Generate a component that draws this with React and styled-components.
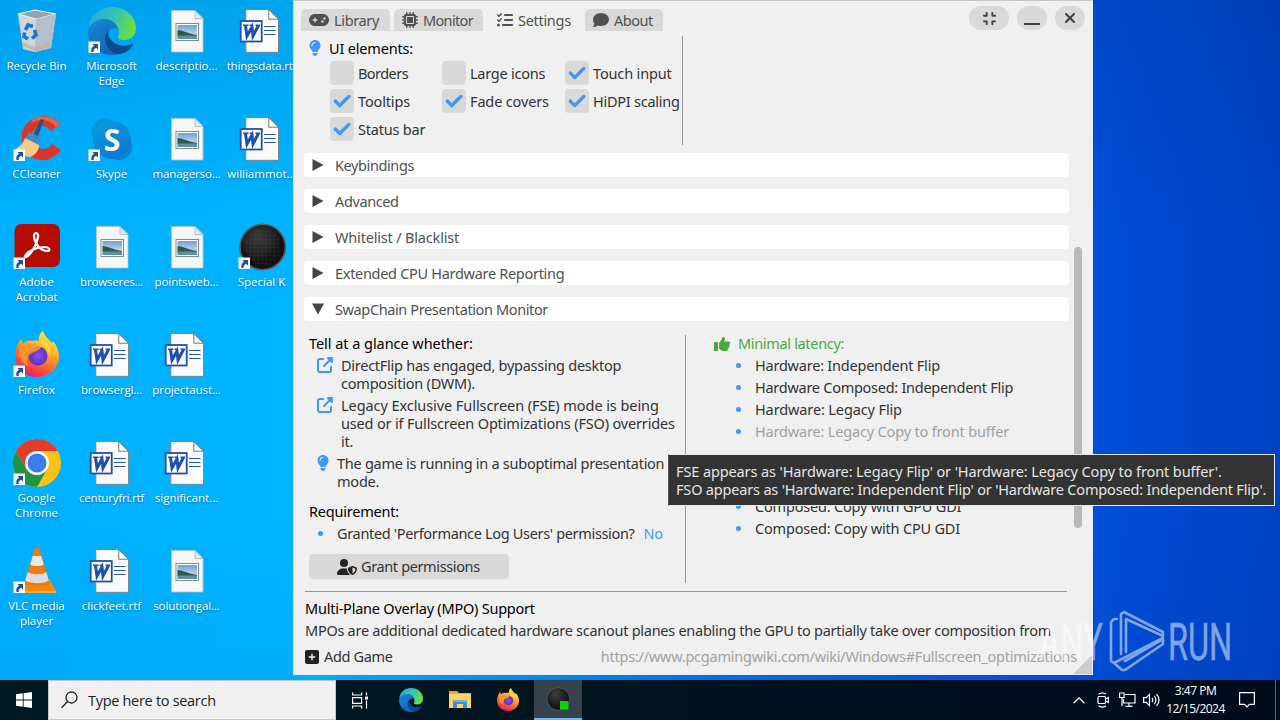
import styled, { createGlobalStyle } from "styled-components";
import {
  FaGamepad,
  FaMicrochip,
  FaListCheck,
  FaComment,
  FaLightbulb,
  FaUpRightFromSquare,
  FaThumbsUp,
  FaUserShield,
  FaSquarePlus,
  FaCheck,
  FaCompress,
  FaXmark,
} from "react-icons/fa6";

const GlobalStyle = createGlobalStyle`
  * { box-sizing: border-box; }
  body { margin: 0; overflow: hidden; }
`;

const blue = "#4296fa";

/* ---------- desktop ---------- */

const Screen = styled.div`
  position: relative;
  width: 1280px;
  height: 720px;
  display: flex;
  flex-direction: column;
  overflow: hidden;
  font-family: "Noto Sans", "Liberation Sans", sans-serif;
`;

const Desktop = styled.main`
  flex: 1;
  overflow: hidden;
  background:
    linear-gradient(180deg, rgba(0, 30, 80, 0.1) 0%, rgba(0, 0, 0, 0) 35%, rgba(0, 0, 0, 0) 75%, rgba(0, 20, 90, 0.04) 100%),
    linear-gradient(90deg, #00b0ff 0%, #00b4ff 24%, #0090ee 42%, #0062dc 66%, #0050da 84%, #0041c4 100%);
`;

const IconGrid = styled.div`
  display: grid;
  grid-auto-flow: column;
  grid-template-rows: repeat(6, 108px);
  grid-auto-columns: 75px;
  margin-left: -1px;
  padding-top: 7px;
`;

const Shortcut = styled.div`
  display: flex;
  flex-direction: column;
  align-items: center;
  svg {
    align-self: flex-start;
    margin-left: 14px;
    overflow: visible;
  }
`;

const Label = styled.span`
  margin-top: 3px;
  font-family: "Open Sans", "Noto Sans", sans-serif;
  font-size: 11.5px;
  line-height: 15px;
  letter-spacing: ${(p) => p.$ls || 0}px;
  color: #fff;
  text-align: center;
  white-space: pre;
  text-shadow: 0 1px 2px rgba(0, 40, 90, 0.55);
`;

const Badge = () => (
  <g>
    <rect x="0.5" y="34.5" width="11.5" height="11.5" fill="#f7f9fb" />
    <path d="M4.500 37h5.500v5.500l-1.800-1.800c-1.900 0.700-2.700 2-2.600 4.300h-2.200c-0.500-3.300 0.500-5.200 2.700-6.200z" fill="#264f96" />
  </g>
);

const EdgeArt = () => (
  <g>
    <defs>
      <linearGradient id="eg1" x1="0" y1="0.2" x2="1" y2="0.5">
        <stop offset="0" stopColor="#2aa8dc" />
        <stop offset="0.5" stopColor="#35c1b8" />
        <stop offset="1" stopColor="#6be03c" />
      </linearGradient>
      <linearGradient id="eg2" x1="0" y1="0" x2="0.6" y2="1">
        <stop offset="0" stopColor="#1a86d8" />
        <stop offset="1" stopColor="#1263b5" />
      </linearGradient>
    </defs>
    <path d="M0.500 21C2 8 12 0 24 0c14 0 24 10 24 21 0 8-6 12-12 12-5 0-7-2-6-4 2-3 1-7-2-11C22 10 9 10 0.500 21z" fill="url(#eg1)" />
    <path d="M0 25C1 16 9 12 16 12c7 0 13 4 14 10-3-2-9-1-10 5-2 9 5 17 17 17-4 3-9 4-13 4C10 48 0 37 0 25z" fill="url(#eg2)" />
    <path d="M20 23c-6 8-2 21 9 24 7 0.500 13-4 16-9 0.500-1-0.500-1.500-1.500-1C32 42 19 35 20 23z" fill="#0d4a93" />
  </g>
);

const FirefoxArt = () => (
  <g>
    <defs>
      <linearGradient id="ff1" x1="0.8" y1="0" x2="0.3" y2="1">
        <stop offset="0" stopColor="#fff04a" />
        <stop offset="0.35" stopColor="#ffb52a" />
        <stop offset="0.65" stopColor="#ff6a2c" />
        <stop offset="1" stopColor="#f0136c" />
      </linearGradient>
      <radialGradient id="ff2">
        <stop offset="0" stopColor="#8a4cf0" />
        <stop offset="1" stopColor="#5a36b8" />
      </radialGradient>
    </defs>
    <path d="M2 25C2 18 4 14 8 8c1 3 2 4 3 4 2-2 5-3 8-2 2-1 5-1 7 0-1-4 1-8 4-10 2 6 6 8 9 12l1-2c4 5 6 10 6 15 0 12-10 21-22 21S2 37 2 25z" fill="url(#ff1)" />
    <circle cx="25" cy="25" r="9.500" fill="url(#ff2)" />
    <path d="M8 14c4-3 9-2 12 1 3 1 6 0 8 1-1 3-5 4-7 5-2 1-5 2-6 4-2 3-1 7 1 10-4-1-7-4-9-8-2-5-1-9 1-13z" fill="#ff9a2e" opacity="0.85" />
    <path d="M28 7c7 5 10 10 9 19-1-6-4-9-8-11z" fill="#ffd83e" />
  </g>
);

const SpecialKArt = () => (
  <g>
    <defs>
      <radialGradient id="sk1" cx="0.4" cy="0.3">
        <stop offset="0" stopColor="#3a3a3a" />
        <stop offset="0.7" stopColor="#202122" />
        <stop offset="1" stopColor="#121212" />
      </radialGradient>
      <pattern id="sk2" width="4" height="4" patternUnits="userSpaceOnUse">
        <path d="M0 0h4M0 0v4" stroke="#464646" strokeWidth="1" opacity="0.45" />
      </pattern>
    </defs>
    <circle cx="24.700" cy="24" r="22.700" fill="url(#sk1)" stroke="#5a6064" strokeWidth="1.600" />
    <circle cx="24.700" cy="24" r="18" fill="url(#sk2)" />
  </g>
);

const art = {
  bin: (
    <g>
      <path d="M5 7L22 3l21 4-5 34-16 4-12-3z" fill="#cfd6dc" />
      <path d="M5 7l18 5 20-5-21-4z" fill="#8fa3b3" stroke="#eef3f6" strokeWidth="1.200" />
      <path d="M23 12l20-5-5 34-16 4z" fill="#b4bfc9" />
      <path d="M9 39l13 5 16-4-1-4-15 4-13-5z" fill="#c9aa9c" opacity="0.7" />
      <g fill="none" stroke="#1976cc" strokeWidth="3.600">
        <path d="M12.500 23l2.500-5 5 1.500" />
        <path d="M21.500 23l1.500 5-4 3.500" />
        <path d="M15 32l-4-2.500 0.500-4" />
      </g>
    </g>
  ),
  edge: <EdgeArt />,
  ccleaner: (
    <g>
      <path d="M47 9C41 1 29-1 20 4 10 9 6 20 10 31s16 17 26 13c5-2 9-5 12-9l-9-6c-4 6-12 7-17 1-4-5-4-12 0-16 5-5 11-4 16 2z" fill="#d8362a" />
      <path d="M20 4C30-1 41 2 47 9l-4 3C37 4 27 3 18 8z" fill="#f0614c" />
      <path d="M28 4l3 1-7 19-5-2z" fill="#23557f" />
      <path d="M16 17l12 5-3 9-13-7z" fill="#3d8cc4" />
      <path d="M12 23l14 7c0 6-4 10-9 12-6 0-12-4-15-8 5-2 8-6 10-11z" fill="#f3cd88" />
    </g>
  ),
  skype: (
    <g>
      <defs>
        <linearGradient id="sky" x1="0" y1="0" x2="0.5" y2="1">
          <stop offset="0" stopColor="#0a9de0" />
          <stop offset="1" stopColor="#0d7ad2" />
        </linearGradient>
      </defs>
      <circle cx="17" cy="17" r="13.500" fill="#0795d6" />
      <circle cx="31" cy="32" r="13" fill="#0b84d6" />
      <circle cx="24" cy="25" r="19" fill="url(#sky)" />
      <text x="24" y="35.500" textAnchor="middle" fontFamily="Open Sans, sans-serif" fontWeight="700" fontSize="30" fill="#fff">S</text>
    </g>
  ),
  acrobat: (
    <g>
      <rect x="1.500" y="1" width="45.500" height="43" rx="7" fill="#b30b00" />
      <path d="M12 33c2-4 11-9 19-9 6 0 7 4 3 4-7 0-13-9-13-15 0-4 5-4 4 1-1 6-5 14-9 18-2 2-5 3-4 1z" fill="none" stroke="#fff" strokeWidth="2.200" strokeLinejoin="round" />
    </g>
  ),
  firefox: <FirefoxArt />,
  chrome: (
    <g>
      <circle cx="24" cy="24" r="24" fill="#fbc116" />
      <path d="M24 24v-12h20.800A24 24 0 0 0 3.200 12L13.600 30z" fill="#e33b2e" />
      <path d="M3.200 12A24 24 0 0 0 24 48L34.400 30 24 24 13.600 30z" fill="#229342" />
      <circle cx="24" cy="24" r="12" fill="#fff" />
      <circle cx="24" cy="24" r="9.500" fill="#3b7ded" />
    </g>
  ),
  vlc: (
    <g>
      <path d="M12 33h25l6 11c0 1.500-0.500 2-2 2H7c-1.500 0-2-0.500-2-2z" fill="#f18a0c" />
      <path d="M5 44h38v2H5z" fill="#f9b035" />
      <path d="M24 1c1.500 0 2.500 0.500 3 2l9.500 33c-3 5-22 5-25 0L21 3c0.500-1.500 1.500-2 3-2z" fill="#ee7d0d" />
      <path d="M19.800 9h8.400l2.600 8.500c-3 2-10.600 2-13.600 0z" fill="#e9e9e9" />
      <path d="M14.700 25c4 3 14.600 3 18.600 0l2.500 8.500c-5 3.500-18.600 3.500-23.600 0z" fill="#dedede" />
    </g>
  ),
  image: (
    <g>
      <defs>
        <linearGradient id="sky2" x1="0" y1="0" x2="0" y2="1">
          <stop offset="0" stopColor="#6f9ed6" />
          <stop offset="1" stopColor="#e6f1f8" />
        </linearGradient>
      </defs>
      <path d="M8.500 3.500h23.500l8 8v33.500h-31.500z" fill="#f6f6f6" stroke="#b9c4c9" strokeWidth="0.800" />
      <path d="M32 3.500v8h8z" fill="#e2ebf1" stroke="#9fb2bd" strokeWidth="0.800" />
      <rect x="13" y="16.500" width="22.500" height="17" fill="#fff" stroke="#7d8d98" />
      <rect x="14.500" y="18" width="19.500" height="14" fill="url(#sky2)" />
      <path d="M14.500 23c4 0 9 3 19.500 5v1H14.500z" fill="#2f5a48" />
      <path d="M14.500 28.500H34V32H14.500z" fill="#5f8fa6" />
    </g>
  ),
  word: (
    <g>
      <path d="M7.800 2.500h23l9.700 9.700v33.100H7.800z" fill="#fbfbfb" stroke="#7a7f85" strokeWidth="0.900" />
      <path d="M30.800 2.500v9.700h9.700z" fill="#fff" stroke="#5f646a" strokeWidth="0.900" />
      <path d="M26 19.500h11.500M26 23.500h11.500M26 27.500h11.500" stroke="#2a5699" strokeWidth="1.100" />
      <rect x="2.700" y="14" width="21" height="20.500" fill="#fff" stroke="#1f4fae" strokeWidth="1.800" />
      <path d="M7.500 18.500l1.500 10.500 5-9 1 9 5.500-10.500" fill="none" stroke="#1f4fae" strokeWidth="3" />
      <path d="M5 18.300h5.500M11.500 18.300h3.500M17.500 18.300h4.500" stroke="#1f4fae" strokeWidth="1.600" />
    </g>
  ),
  specialk: <SpecialKArt />,
};

const shortcuts = [
  { icon: "bin", name: "Recycle Bin" },
  { icon: "ccleaner", name: "CCleaner", link: true },
  { icon: "acrobat", name: "Adobe\nAcrobat", link: true },
  { icon: "firefox", name: "Firefox", link: true },
  { icon: "chrome", name: "Google\nChrome", link: true },
  { icon: "vlc", name: "VLC media\nplayer", link: true },
  { icon: "edge", name: "Microsoft\nEdge", link: true },
  { icon: "skype", name: "Skype", link: true },
  { icon: "image", name: "browseres...", ls: -0.2 },
  { icon: "word", name: "browsergl...", ls: -0.1 },
  { icon: "word", name: "centuryfri.rtf", ls: -0.2 },
  { icon: "word", name: "clickfeet.rtf" },
  { icon: "image", name: "descriptio..." },
  { icon: "image", name: "managerso...", ls: -0.1 },
  { icon: "image", name: "pointsweb...", ls: -0.1 },
  { icon: "word", name: "projectaust...", ls: -0.1 },
  { icon: "word", name: "significant..." },
  { icon: "image", name: "solutiongal...", ls: -0.1 },
  { icon: "word", name: "thingsdata.rtf", ls: -0.2 },
  { icon: "word", name: "williammot..." },
  { icon: "specialk", name: "Special K", link: true },
];

/* ---------- app window ---------- */

const Window = styled.section`
  position: absolute;
  left: 293px;
  top: 0;
  width: 800px;
  height: 675px;
  display: flex;
  flex-direction: column;
  overflow: hidden;
  background: #f0f0f0;
  border: 1px solid #e6ecf2;
  border-top-color: #c4c4c4;
  font-size: 14.5px;
  line-height: 18px;
  color: #333;
  white-space: nowrap;
`;

/* nudged up a pixel so the baseline sits level with the icons */
const Text = styled.span`
  margin: -1px 0 1px;
  letter-spacing: ${(p) => p.$ls ?? -0.22}px;
`;

const TitleBar = styled.header`
  display: flex;
  align-items: flex-end;
  height: 30px;
  padding: 0 7px;
  flex-shrink: 0;
`;

const Tab = styled.div`
  display: flex;
  align-items: center;
  gap: 5px;
  width: ${(p) => p.$w}px;
  height: 22px;
  margin-right: 4px;
  padding-left: ${(p) => p.$pl || 8}px;
  border-radius: 5px 5px 0 0;
  background: ${(p) => (p.$active ? "transparent" : "#d9d9d9")};
  color: #505050;
  letter-spacing: ${(p) => p.$ls || 0}px;
`;

const Controls = styled.div`
  display: flex;
  gap: 8px;
  margin-left: auto;
  align-self: flex-start;
  padding-top: 5px;
`;

const Pill = styled.div`
  display: flex;
  align-items: center;
  justify-content: center;
  width: ${(p) => p.$w || 30}px;
  height: 24px;
  border-radius: 12px;
  background: #d9d9d9;
  color: #404040;
`;

const MinBar = styled.span`
  width: 16px;
  height: 2px;
  margin-top: 12px;
  background: #404040;
`;

const Body = styled.div`
  display: flex;
  height: 612px;
  flex-shrink: 0;
  padding-left: 10px;
`;

const Page = styled.div`
  width: 766px;
  padding-top: 5px;
  flex-shrink: 0;
`;

const Track = styled.div`
  margin-left: 4px;
  padding-top: 216px;
`;

const Thumb = styled.div`
  width: 8px;
  height: 281px;
  border-radius: 4px;
  background: #b9b9b9;
`;

const UiElements = styled.div`
  width: 379px;
  height: 109px;
  border-right: 1px solid #959595;
  padding: 3px 0 0 5px;
`;

const Heading = styled.div`
  display: flex;
  align-items: center;
  height: 18px;
  margin-top: ${(p) => p.$mt || 0}px;
  color: ${(p) => p.$color || "#000"};
  letter-spacing: ${(p) => p.$ls || 0}px;
  svg { margin-right: 8px; }
`;

const Bulb = styled(FaLightbulb)`
  width: 12px;
  height: 16px;
  color: ${blue};
`;

const Tick = styled(FaCheck)`
  width: 18px;
  height: 18px;
  stroke: currentColor;
  stroke-width: 30;
`;

const CheckGrid = styled.div`
  display: grid;
  grid-template-columns: 112px 123px 118px;
  grid-auto-rows: 24px;
  row-gap: 4px;
  margin: 4px 0 0 21px;
`;

const CheckRow = styled.label`
  display: flex;
  align-items: center;
  gap: 4px;
  letter-spacing: ${(p) => p.$ls}px;
`;

const Box = styled.span`
  display: flex;
  align-items: center;
  justify-content: center;
  width: 24px;
  height: 24px;
  flex-shrink: 0;
  border-radius: 4px;
  background: #d9d9d9;
  color: ${blue};
`;

const Sections = styled.div`
  display: flex;
  flex-direction: column;
  gap: 12px;
  margin-top: 8px;
`;

const SectionBar = styled.div`
  display: flex;
  align-items: center;
  gap: 11px;
  width: 765px;
  height: 24px;
  padding: 2px 8px 0;
  border-radius: 4px;
  background: #fff;
  color: #505050;
`;

const Monitor = styled.div`
  display: flex;
  height: 248px;
  margin-top: 14px;
`;

const Column = styled.div`
  display: flex;
  flex-direction: column;
  width: ${(p) => p.$w}px;
  padding-left: ${(p) => p.$pl}px;
  border-right: ${(p) => (p.$line ? "1px solid #959595" : "none")};
`;

const Item = styled.div`
  display: flex;
  margin-top: 4px;
  margin-left: ${(p) => p.$ml || 0}px;
  color: ${(p) => (p.$dim ? "#a0a0a0" : "#333")};
  white-space: pre;
`;

const Lines = styled.div`
  display: flex;
  flex-direction: column;
`;

const Mark = styled.span`
  display: flex;
  align-items: center;
  width: ${(p) => p.$w}px;
  height: 18px;
  margin-top: -1px;
  flex-shrink: 0;
  color: ${blue};
`;

const Dot = styled.i`
  width: 5px;
  height: 5px;
  margin: 1px 0 0 1px;
  border-radius: 50%;
  background: ${blue};
`;

const Gap = styled.div`
  height: 53px;
`;

const Answer = styled.span`
  margin: -1px 0 0 9px;
  letter-spacing: -0.3px;
  color: ${blue};
`;

const Button = styled.div`
  display: flex;
  align-items: center;
  gap: 4px;
  width: 200px;
  height: 25px;
  margin-top: 11px;
  padding-left: 28px;
  border-radius: 4px;
  background: #d9d9d9;
`;

const Rule = styled.div`
  width: 762px;
  height: 1px;
  margin: 8px 0 7px 1px;
  background: #959595;
`;

const Line = styled.div`
  margin: 0 0 4px 1px;
  letter-spacing: ${(p) => p.$ls || 0}px;
  color: ${(p) => p.$color || "#333"};
`;

const StatusBar = styled.footer`
  display: flex;
  align-items: center;
  gap: 4px;
  height: 26px;
  padding: 1px 15px 0 10px;
`;

const Url = styled(Text)`
  margin-left: auto;
  color: #a2a2a2;
`;

const Grip = styled.svg`
  position: absolute;
  right: 0;
  bottom: 0;
`;

const Tooltip = styled.div`
  position: absolute;
  left: 668px;
  top: 454px;
  width: 607px;
  height: 52px;
  padding: 7px 0 0 7px;
  border: 1px solid #dfe5ea;
  border-left-color: #555;
  background: #333;
  color: #e6e6e6;
  font-size: 14.5px;
  line-height: 18px;
  white-space: pre;
`;

const TipLine = styled.div`
  letter-spacing: ${(p) => p.$ls || 0}px;
`;

const Watermark = styled.svg`
  position: absolute;
  left: 1034px;
  top: 606px;
`;

/* ---------- taskbar ---------- */

const Taskbar = styled.footer`
  display: flex;
  height: 40px;
  background: linear-gradient(90deg, #001a24 0%, #001420 45%, #000b1c 100%);
  color: #fff;
`;

const Slot = styled.div`
  display: flex;
  align-items: center;
  justify-content: center;
  width: ${(p) => p.$w || 48}px;
  height: 40px;
  background: ${(p) => (p.$active ? "#36434e" : "none")};
  border-bottom: ${(p) => (p.$active ? "2px solid #76b9ed" : "none")};
`;

const Search = styled.div`
  display: flex;
  align-items: center;
  gap: 10px;
  width: 288px;
  height: 40px;
  padding-left: 12px;
  border: 1px solid #c3c7c9;
  background: #f1f1f1;
  color: #222;
  font-family: "Open Sans", "Noto Sans", sans-serif;
  font-size: 14.5px;
  letter-spacing: -0.3px;
`;

const Tray = styled.div`
  display: flex;
  align-items: center;
  margin-left: auto;
`;

const Clock = styled.div`
  width: 65px;
  text-align: center;
  font-family: "Open Sans", "Noto Sans", sans-serif;
  font-size: 12px;
  line-height: 18px;
  letter-spacing: -0.5px;
`;

const ShowDesktop = styled.div`
  width: 5px;
  height: 40px;
  margin-left: 10px;
  border-left: 1px solid #5b6570;
`;

const checks = [
  ["Borders", false, -0.55],
  ["Large icons", false, -0.25],
  ["Touch input", true, -0.15],
  ["Tooltips", true, -0.15],
  ["Fade covers", true, -0.15],
  ["HiDPI scaling", true, -0.25],
  ["Status bar", true, -0.2],
];

const sections = [
  ["Keybindings", false, -0.4],
  ["Advanced", false, -0.38],
  ["Whitelist / Blacklist", false, -0.18],
  ["Extended CPU Hardware Reporting", false, -0.3],
  ["SwapChain Presentation Monitor", true, -0.38],
];

const Arrow = ({ open }) => (
  <svg width="12" height="14" viewBox="0 0 12 14" fill="#454545">
    {open ? <path d="M0 0.500h12l-6 11z" /> : <path d="M0.500 0l11 6-11 6z" />}
  </svg>
);

const Bullet = ({ children, dim, ml, ls, extra }) => (
  <Item $dim={dim} $ml={ml}>
    <Mark $w={20}>
      <Dot />
    </Mark>
    <Text $ls={ls}>{children}</Text>
    {extra}
  </Item>
);

const SettingsWindow = () => (
  <Window>
    <TitleBar>
      <Tab $w={89} $ls={-0.35}>
        <FaGamepad size={20} />
        Library
      </Tab>
      <Tab $w={89} $ls={-0.65}>
        <FaMicrochip size={16} />
        Monitor
      </Tab>
      <Tab $w={94} $active $pl={10} $ls={-0.3}>
        <FaListCheck size={16} />
        Settings
      </Tab>
      <Tab $w={78} $ls={-0.5}>
        <FaComment size={16} />
        About
      </Tab>
      <Controls>
        <Pill $w={40}>
          <FaCompress size={15} />
        </Pill>
        <Pill>
          <MinBar />
        </Pill>
        <Pill>
          <FaXmark size={16} />
        </Pill>
      </Controls>
    </TitleBar>

    <Body>
      <Page>
        <UiElements>
          <Heading $ls={-0.18}>
            <Bulb />
            UI elements:
          </Heading>
          <CheckGrid>
            {checks.map(([name, on, ls]) => (
              <CheckRow key={name} $ls={ls}>
                <Box>{on && <Tick />}</Box>
                {name}
              </CheckRow>
            ))}
          </CheckGrid>
        </UiElements>

        <Sections>
          {sections.map(([name, open, ls]) => (
            <SectionBar key={name}>
              <Arrow open={open} />
              <Text $ls={ls}>{name}</Text>
            </SectionBar>
          ))}
        </Sections>

        <Monitor>
          <Column $w={382} $pl={5} $line>
            <Heading>
              <Text $ls={-0.05}>Tell at a glance whether:</Text>
            </Heading>
            <Item $ml={8}>
              <Mark $w={24}>
                <FaUpRightFromSquare size={16} />
              </Mark>
              <Lines>
                <Text $ls={-0.26}>DirectFlip has engaged, bypassing desktop</Text>
                <Text>composition (DWM).</Text>
              </Lines>
            </Item>
            <Item $ml={8}>
              <Mark $w={24}>
                <FaUpRightFromSquare size={16} />
              </Mark>
              <Lines>
                <Text $ls={-0.07}>Legacy Exclusive Fullscreen (FSE) mode is being</Text>
                <Text $ls={-0.17}>used or if Fullscreen Optimizations (FSO) overrides</Text>
                <Text>it.</Text>
              </Lines>
            </Item>
            <Item $ml={8}>
              <Mark $w={20}>
                <Bulb />
              </Mark>
              <Lines>
                <Text $ls={-0.27}>The game is running in a suboptimal presentation</Text>
                <Text>mode.</Text>
              </Lines>
            </Item>
            <Heading $mt={12}>
              <Text>Requirement:</Text>
            </Heading>
            <Bullet ml={8} ls={-0.33} extra={<Answer>No</Answer>}>
              Granted 'Performance Log Users' permission?
            </Bullet>
            <Button>
              <FaUserShield size={20} color="#222" />
              <Text $ls={-0.37}>Grant permissions</Text>
            </Button>
          </Column>
          <Column $w={384} $pl={28}>
            <Heading $color="#4aa83a">
              <FaThumbsUp size={16} />
              <Text $ls={-0.33}>Minimal latency:</Text>
            </Heading>
            <Bullet ml={21} ls={-0.22}>Hardware: Independent Flip</Bullet>
            <Bullet ml={21} ls={-0.27}>Hardware Composed: Independent Flip</Bullet>
            <Bullet ml={21} ls={-0.12}>Hardware: Legacy Flip</Bullet>
            <Bullet ml={21} ls={-0.17} dim>Hardware: Legacy Copy to front buffer</Bullet>
            <Gap />
            <Bullet ml={21} ls={-0.19}>Composed: Copy with GPU GDI</Bullet>
            <Bullet ml={21} ls={-0.19}>Composed: Copy with CPU GDI</Bullet>
          </Column>
        </Monitor>

        <Rule />
        <Line $color="#000" $ls={-0.23}>Multi-Plane Overlay (MPO) Support</Line>
        <Line $ls={-0.27}>
          MPOs are additional dedicated hardware scanout planes enabling the GPU to partially take over composition from
        </Line>
      </Page>
      <Track>
        <Thumb />
      </Track>
    </Body>

    <StatusBar>
      <FaSquarePlus size={16} color="#222" />
      <Text $ls={-0.35}>Add Game</Text>
      <Url $ls={-0.24}>https://www.pcgamingwiki.com/wiki/Windows#Fullscreen_optimizations</Url>
    </StatusBar>
    <Grip width="19" height="19">
      <path d="M19 0v19H0z" fill="#cdcdcd" />
    </Grip>
  </Window>
);

const App = () => (
  <Screen>
    <GlobalStyle />
    <Desktop>
      <IconGrid>
        {shortcuts.map((s) => (
          <Shortcut key={s.name}>
            <svg width="48" height="48" viewBox="0 0 48 48">
              {art[s.icon]}
              {s.link && <Badge />}
            </svg>
            <Label $ls={s.ls}>{s.name}</Label>
          </Shortcut>
        ))}
      </IconGrid>
    </Desktop>

    <SettingsWindow />

    <Tooltip>
      <TipLine $ls={-0.11}>FSE appears as 'Hardware: Legacy Flip' or 'Hardware: Legacy Copy to front buffer'.</TipLine>
      <TipLine $ls={-0.18}>FSO appears as 'Hardware: Independent Flip' or 'Hardware Composed: Independent Flip'.</TipLine>
    </Tooltip>

    <Watermark width="200" height="70" viewBox="0 0 200 70">
      <g fill="#fff" stroke="#fff" strokeWidth="0.3" opacity="0.5" fontFamily="Roboto, sans-serif" fontSize="52">
        <text transform="translate(5 54) scale(0.63 1)">ANY</text>
        <text transform="translate(134 54) scale(0.625 1)">RUN</text>
      </g>
      <g fill="none" stroke="#fff" strokeWidth="2.600" strokeLinejoin="round" strokeLinecap="round" opacity="0.5">
        <path d="M87 48V8l3-2 39 20v4L92 13v33" />
        <path d="M83 13h-3l-3 3v39l3 2 49-25" />
        <path d="M80 57l8 7h3l38-26v-5L91 55" />
      </g>
    </Watermark>

    <Taskbar>
      <Slot>
        <svg width="16" height="16" viewBox="0 0 16 16" fill="#fff">
          <path d="M0 2.200L6.800 1.300v6.300H0zM7.600 1.200L16 0v7.600H7.600zM0 8.400h6.800v6.300L0 13.800zM7.600 8.400H16V16l-8.400-1.200z" />
        </svg>
      </Slot>
      <Search>
        <svg width="17" height="18" viewBox="0 0 17 18" fill="none" stroke="#222" strokeWidth="1.300">
          <circle cx="10.500" cy="6.500" r="5.500" />
          <path d="M6.600 10.500L0.600 16.800" />
        </svg>
        Type here to search
      </Search>
      <Slot>
        <svg width="18" height="17" viewBox="0 0 18 17" fill="none" stroke="#fff" strokeWidth="1.200">
          <path d="M1.600 0.500v2.500h9v-2.500M1.600 16.500v-2.500h9v2.500M1.600 5.600h9v5.800h-9zM15.500 0.500v3M15.500 8.500v8" />
          <path d="M14 4.500h3v3h-3z" fill="#fff" stroke="none" />
        </svg>
      </Slot>
      <Slot $w={54}>
        <svg width="24" height="24" viewBox="0 0 48 48">
          <EdgeArt />
        </svg>
      </Slot>
      <Slot $w={44}>
        <svg width="22" height="20" viewBox="0 0 22 20">
          <path d="M0 1h8l2 2h12v15H0z" fill="#e8a92c" />
          <path d="M0 4h22v14H0z" fill="#ffd566" />
          <path d="M4 10h14v8h-4v-4H8v4H4z" fill="#3f8fd0" />
          <path d="M4 10h14v2H4z" fill="#6bb2e6" />
        </svg>
      </Slot>
      <Slot $w={52}>
        <svg width="24" height="24" viewBox="0 0 48 48">
          <FirefoxArt />
        </svg>
      </Slot>
      <Slot $active>
        <svg width="24" height="24" viewBox="0 0 48 48">
          <SpecialKArt />
          <rect x="28" y="28" width="17" height="17" fill="#10d010" />
        </svg>
      </Slot>
      <Tray>
        <Slot $w={24}>
          <svg width="12" height="7" viewBox="0 0 12 7" fill="none" stroke="#fff" strokeWidth="1.300">
            <path d="M0.600 6.300L6 0.900l5.400 5.400" />
          </svg>
        </Slot>
        <Slot $w={24}>
          <svg width="12" height="16" viewBox="0 0 12 16" fill="none" stroke="#fff" strokeWidth="1.200">
            <rect x="1" y="4.500" width="7.500" height="7" rx="1" />
            <path d="M8.500 7l2.800-1.500v5L8.500 9M1.500 2.200C4 0.300 6.500 0.300 9 2.200M1.500 13.800c2.500 1.900 5 1.900 7.500 0" />
          </svg>
        </Slot>
        <Slot $w={24}>
          <svg width="17" height="16" viewBox="0 0 17 16" fill="none" stroke="#fff" strokeWidth="1.200">
            <path d="M6 2.500h10v8.500H4.500V7M10 11v3M6.500 14.400h7M0.600 1h4.500v4.500H0.600zM3 5.500V14" />
          </svg>
        </Slot>
        <Slot $w={24}>
          <svg width="17" height="14" viewBox="0 0 17 14" fill="none" stroke="#fff" strokeWidth="1.200">
            <path d="M0.600 4.700h2.600L6.500 1.400v11.200L3.200 9.300H0.600zM9 4.800c1 1.400 1 3 0 4.400M11.300 3c2 2.500 2 5.500 0 8M13.600 1.200c3 3.600 3 8 0 11.600" />
          </svg>
        </Slot>
        <Clock>
          3:47 PM
          <br />
          12/15/2024
        </Clock>
        <Slot $w={37}>
          <svg width="16" height="16" viewBox="0 0 16 16" fill="none" stroke="#fff" strokeWidth="1.200">
            <path d="M0.600 0.600h14.800v11.800H10.500L8 15l-2.500-2.600H0.600z" />
          </svg>
        </Slot>
        <ShowDesktop />
      </Tray>
    </Taskbar>
  </Screen>
);

export default App;
